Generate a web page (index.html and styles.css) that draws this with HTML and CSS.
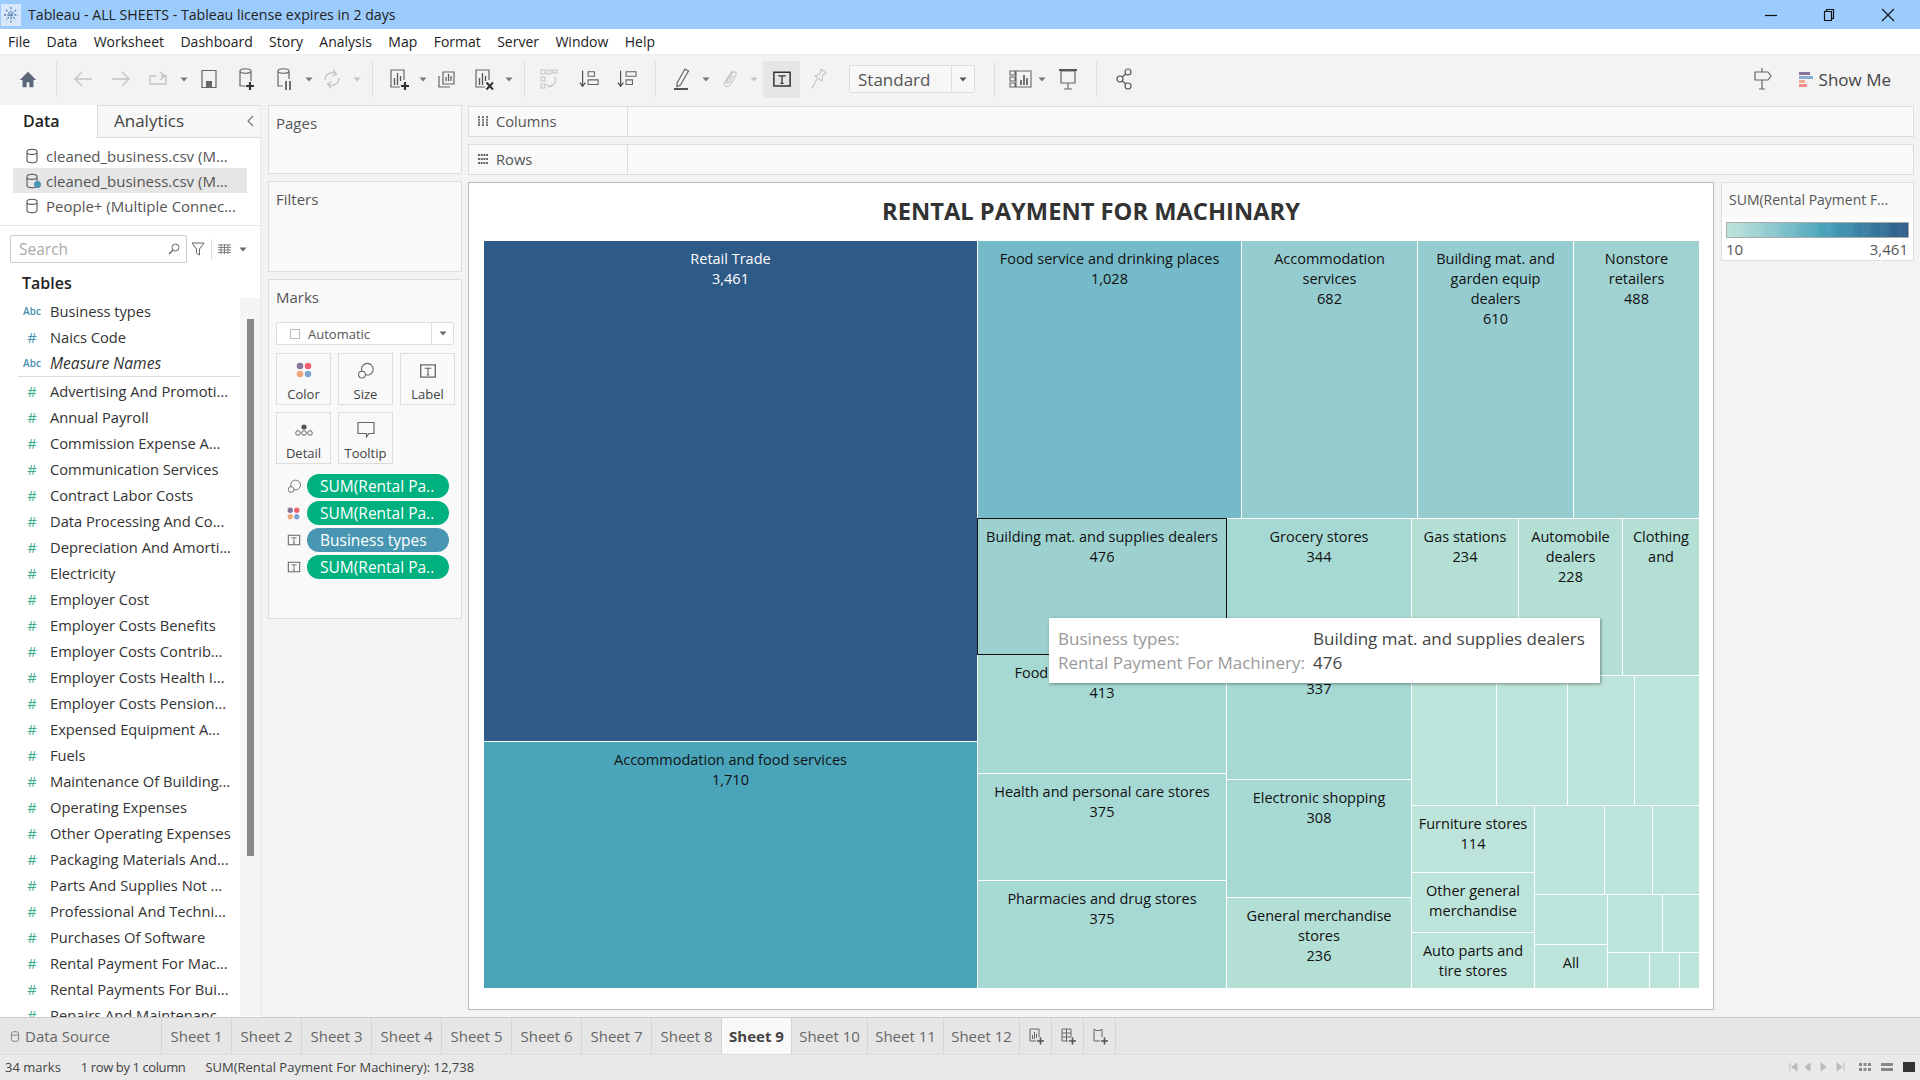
FILE: index.html
```html
<!DOCTYPE html>
<html lang="en">
<head>
    <meta charset="UTF-8">
    <title>Tableau - ALL SHEETS</title>
    <link rel="stylesheet" href="styles.css">
</head>
<body>
    <svg class="defs" width="0" height="0">
        <symbol id="cyl" viewBox="0 0 14 16"><path d="M2 3.5v9c0 3 10 3 10 0v-9c0-3-10-3-10 0zM2 4.5c0 2.5 10 2.5 10 0" fill="none" stroke="currentColor" stroke-width="1.1"/></symbol>
        <symbol id="tbox" viewBox="0 0 16 16"><path d="M1.5 2.5h13v11h-13z" fill="none" stroke="currentColor" stroke-width="1.2"/><path d="M5 5.5h6M8 5.5v6M6.8 11.5h2.4" fill="none" stroke="currentColor"/></symbol>
        <symbol id="size" viewBox="0 0 20 20"><circle cx="11.5" cy="8" r="6.5" fill="none" stroke="currentColor" stroke-width="1.2"/><circle cx="5.5" cy="14" r="3.8" fill="#f9f9f9" stroke="currentColor" stroke-width="1.2"/></symbol>
        <symbol id="dots" viewBox="0 0 16 16"><circle cx="4" cy="4" r="3.3" fill="#87749b"/><circle cx="12" cy="4" r="3.3" fill="#f0616d"/><circle cx="4" cy="12" r="3.3" fill="#f0a878"/><circle cx="12" cy="12" r="3.3" fill="#7fa6d2"/></symbol>
        <symbol id="caret" viewBox="0 0 8 5"><path d="M0.5 0.5h7L4 4.5z" fill="currentColor"/></symbol>
    </svg>

    <header class="titlebar">
        <svg class="applogo" width="20" height="22" viewBox="0 0 20 22">
            <rect width="20" height="22" fill="#d8e8fa"/>
            <path d="M10 3v16M3 11h14M5 6l10 10M15 6L5 16" stroke="#4d7fb0" stroke-width="1.3" stroke-dasharray="2 1.4"/>
        </svg>
        <span class="titletext">Tableau - ALL SHEETS - Tableau license expires in 2 days</span>
        <div class="winctl">
            <svg width="12" height="12" viewBox="0 0 12 12"><path d="M0 6.5h12" stroke="#111" stroke-width="1.2"/></svg>
            <svg width="12" height="14" viewBox="0 0 12 14"><path d="M1.5 3.5h7v9h-7zM3.5 3V1.5h7v9H9" fill="none" stroke="#111" stroke-width="1.2"/></svg>
            <svg width="14" height="14" viewBox="0 0 14 14"><path d="M1 1l12 12M13 1L1 13" stroke="#111" stroke-width="1.1"/></svg>
        </div>
    </header>

    <nav class="menubar">
        <span>File</span><span>Data</span><span>Worksheet</span><span>Dashboard</span><span>Story</span><span>Analysis</span><span>Map</span><span>Format</span><span>Server</span><span>Window</span><span>Help</span>
    </nav>

    <div class="toolbar">
        <div class="tool"><svg width="20" height="20" viewBox="0 0 22 22"><path d="M11 3L2 12h3v8h4.500v-5.500h3V20H17v-8h3z" fill="#5b6778"/></svg></div>
        <i class="sep"></i>
        <div class="tool off"><svg width="22" height="22" viewBox="0 0 22 22"><path d="M20 11H3M10 4l-7 7 7 7" fill="none" stroke="currentColor" stroke-width="1.4"/></svg></div>
        <div class="tool off"><svg width="22" height="22" viewBox="0 0 22 22"><path d="M2 11h17M12 4l7 7-7 7" fill="none" stroke="currentColor" stroke-width="1.4"/></svg></div>
        <div class="tool off"><svg width="22" height="22" viewBox="0 0 22 22"><path d="M8 8H2v8h16V8h-5M12 4l5 4-5 4" fill="none" stroke="currentColor" stroke-width="1.4"/></svg></div>
        <div class="drop"><svg width="8" height="5"><use href="#caret"/></svg></div>
        <div class="tool"><svg width="22" height="22" viewBox="0 0 22 22"><path d="M4 2.500h14v17H4z" fill="none" stroke="#666" stroke-width="1.2"/><path d="M8 13h6v6.500H8z" fill="#666"/></svg></div>
        <div class="tool"><svg width="22" height="24" viewBox="0 0 22 24"><path d="M4 4v15h5M15 14V4c0-3-11-3-11 0 0 3 11 3 11 0" fill="none" stroke="#666" stroke-width="1.2"/><path d="M10 19h8M14 15v8" stroke="#333" stroke-width="2.200"/></svg></div>
        <div class="tool"><svg width="22" height="24" viewBox="0 0 22 24"><path d="M4 4v15h5M15 12V4c0-3-11-3-11 0 0 3 11 3 11 0" fill="none" stroke="#666" stroke-width="1.2"/><path d="M12 14v9M16 14v9" stroke="#444" stroke-width="1.500"/></svg></div>
        <div class="drop tight"><svg width="8" height="5"><use href="#caret"/></svg></div>
        <div class="tool off"><svg width="22" height="22" viewBox="0 0 22 22"><path d="M4 12a7 7 0 0 1 11-6M18 10a7 7 0 0 1-11 6M12 2l3.500 4-4 2M10 20l-3.500-4 4-2" fill="none" stroke="currentColor" stroke-width="1.300"/></svg></div>
        <div class="drop off"><svg width="8" height="5"><use href="#caret"/></svg></div>
        <i class="sep"></i>
        <div class="tool"><svg width="22" height="24" viewBox="0 0 22 24"><path d="M12 20H3V3h13v10" fill="none" stroke="#666" stroke-width="1.2"/><path d="M6.500 18V11M9.500 18V6M12.500 14V9" stroke="#555" stroke-width="1.300"/><path d="M13 19h8M17 15v8" stroke="#333" stroke-width="2.200"/></svg></div>
        <div class="drop tight"><svg width="8" height="5"><use href="#caret"/></svg></div>
        <div class="tool"><svg width="22" height="22" viewBox="0 0 22 22"><path d="M8 4h11v12H8z M4 8v11h11" fill="none" stroke="#666" stroke-width="1.2"/><path d="M11 13V9M13.500 13V6M16 13V8" stroke="#555" stroke-width="1.200"/></svg></div>
        <div class="tool"><svg width="22" height="24" viewBox="0 0 22 24"><path d="M12 20H3V3h13v10" fill="none" stroke="#666" stroke-width="1.2"/><path d="M6.500 18V11M9.500 18V6M12.500 14V9" stroke="#555" stroke-width="1.300"/><path d="M13.500 15.500l6.500 7M20 15.500l-6.500 7" stroke="#333" stroke-width="2"/></svg></div>
        <div class="drop"><svg width="8" height="5"><use href="#caret"/></svg></div>
        <i class="sep"></i>
        <div class="tool off shift-left"><svg width="22" height="24" viewBox="0 0 22 24"><path d="M3 3h4v4H3zM9 3h4v4H9zM15 3h4v3h-4zM3 10h4v4H3zM3 17h4v4H3zM17 10c2 5-1 9-6 10M9 17l2 3 3-2" fill="none" stroke="currentColor" stroke-width="1.100"/></svg></div>
        <div class="tool"><svg width="20" height="22" viewBox="0 0 22 24"><path d="M4 3v16M1 16l3 4 3-4" fill="none" stroke="#444" stroke-width="1.200"/><path d="M10 4h7v5h-7zM10 13h11v5H10z" fill="none" stroke="#666" stroke-width="1.200"/></svg></div>
        <div class="tool"><svg width="20" height="22" viewBox="0 0 22 24"><path d="M4 3v16M1 16l3 4 3-4" fill="none" stroke="#444" stroke-width="1.200"/><path d="M10 4h11v5H10zM10 13h7v5h-7z" fill="none" stroke="#666" stroke-width="1.200"/></svg></div>
        <i class="sep"></i>
        <div class="tool"><svg width="22" height="24" viewBox="0 0 22 24"><path d="M6 16L14 2l3.500 2-8 14-3.500 1.500z" fill="none" stroke="#666" stroke-width="1.200"/><path d="M3 22h14" stroke="#555" stroke-width="2"/></svg></div>
        <div class="drop tight"><svg width="8" height="5"><use href="#caret"/></svg></div>
        <div class="tool off"><svg width="22" height="24" viewBox="0 0 22 24"><path d="M14 4L7 15c-2 4 3 6 5 3l6-10c1-3-2-4-4-2L9 14c-1 2 1 3 2 1l4-7" fill="none" stroke="currentColor" stroke-width="1.100"/></svg></div>
        <div class="drop off"><svg width="8" height="5"><use href="#caret"/></svg></div>
        <div class="toggle"><svg width="20" height="20" class="dark"><use href="#tbox"/></svg></div>
        <div class="tool off"><svg width="22" height="24" viewBox="0 0 22 24"><path d="M13 2l5 4-3 2-1 6-7-5 5-2zM9 12l-5 9" fill="none" stroke="currentColor" stroke-width="1.100"/></svg></div>
        <div class="picker"><span>Standard</span><b><svg width="8" height="5"><use href="#caret"/></svg></b></div>
        <i class="sep wide"></i>
        <div class="tool"><svg width="24" height="22" viewBox="0 0 24 22"><path d="M1 3h5v4H1zM1 9h5v4H1zM1 15h5v4H1zM7 3h15v16H7z" fill="none" stroke="#666" stroke-width="1.100"/><path d="M12 17v-5M15 17V7M18 17v-7" stroke="#555" stroke-width="1.600"/></svg></div>
        <div class="drop tight pull"><svg width="8" height="5"><use href="#caret"/></svg></div>
        <div class="tool"><svg width="22" height="24" viewBox="0 0 22 24"><path d="M2 3h18" stroke="#555" stroke-width="2"/><path d="M4 4h14v12H4zM11 16v6M7 22h8" fill="none" stroke="#666" stroke-width="1.200"/></svg></div>
        <i class="sep"></i>
        <div class="tool"><svg width="22" height="24" viewBox="-2 0 22 24"><circle cx="14" cy="5" r="3" fill="none" stroke="#555" stroke-width="1.200"/><circle cx="6" cy="12" r="3" fill="none" stroke="#555" stroke-width="1.200"/><circle cx="14" cy="19" r="3" fill="none" stroke="#555" stroke-width="1.200"/><path d="M8 10l4-3M8 14l4 3" stroke="#555" stroke-width="1.200"/></svg></div>
        <div class="tool end"><svg width="22" height="24" viewBox="0 0 22 24"><path d="M3 5h13l3 4-3 4H3zM10 1v4M10 13v9M7 22h6" fill="none" stroke="#666" stroke-width="1.200"/></svg></div>
        <div class="showme">
            <div class="showme-bars"><i class="b1"></i><i class="b2"></i><i class="b3"></i><i class="b4"></i></div>
            <span>Show Me</span>
        </div>
    </div>

    <main class="workspace">
        <aside class="datapane">
            <div class="pane-tabs">
                <div class="pane-tab active">Data</div>
                <div class="pane-tab">Analytics<svg class="collapse" width="8" height="12" viewBox="0 0 8 12"><path d="M7 1L2 6l5 5" fill="none" stroke="#777" stroke-width="1.200"/></svg></div>
            </div>
            <div class="sources">
                <div class="source"><svg width="14" height="16"><use href="#cyl"/></svg>cleaned_business.csv (M...</div>
                <div class="source current"><svg width="14" height="16"><use href="#cyl"/></svg><i class="tick"></i>cleaned_business.csv (M...</div>
                <div class="source"><svg width="14" height="16"><use href="#cyl"/></svg>People+ (Multiple Connec...</div>
            </div>
            <div class="searchrow">
                <div class="searchbox">
                    <span>Search</span>
                    <svg width="12" height="12" viewBox="0 0 12 12"><circle cx="7.500" cy="4.500" r="3.500" fill="none" stroke="#666"/><path d="M5 7l-4 4" stroke="#666" stroke-width="1.300"/></svg>
                </div>
                <svg class="funnel" width="14" height="14" viewBox="0 0 14 14"><path d="M1 1h12L8.500 7v6l-3-2V7z" fill="none" stroke="#666"/></svg>
                <i class="searchsep"></i>
                <svg width="13" height="10" viewBox="0 0 13 10"><path d="M0 1h13M0 3.500h13M0 6h13M0 8.500h13M3 0v10M6.500 0v10M10 0v10" stroke="#777" stroke-width="0.900"/></svg>
                <svg class="searchcaret" width="8" height="5"><use href="#caret"/></svg>
            </div>
            <h3 class="tables">Tables</h3>
            <div class="fieldarea">
                <div class="fields">
                    <div class="field"><b class="abc">Abc</b>Business types</div>
                    <div class="field"><b class="hash dim">#</b>Naics Code</div>
                    <div class="field calc"><b class="abc">Abc</b><em>Measure Names</em></div>
                    <div class="fields-line"></div>
                    <div class="field"><b class="hash">#</b>Advertising And Promoti...</div>
                    <div class="field"><b class="hash">#</b>Annual Payroll</div>
                    <div class="field"><b class="hash">#</b>Commission Expense A...</div>
                    <div class="field"><b class="hash">#</b>Communication Services</div>
                    <div class="field"><b class="hash">#</b>Contract Labor Costs</div>
                    <div class="field"><b class="hash">#</b>Data Processing And Co...</div>
                    <div class="field"><b class="hash">#</b>Depreciation And Amorti...</div>
                    <div class="field"><b class="hash">#</b>Electricity</div>
                    <div class="field"><b class="hash">#</b>Employer Cost</div>
                    <div class="field"><b class="hash">#</b>Employer Costs Benefits</div>
                    <div class="field"><b class="hash">#</b>Employer Costs Contrib...</div>
                    <div class="field"><b class="hash">#</b>Employer Costs Health I...</div>
                    <div class="field"><b class="hash">#</b>Employer Costs Pension...</div>
                    <div class="field"><b class="hash">#</b>Expensed Equipment A...</div>
                    <div class="field"><b class="hash">#</b>Fuels</div>
                    <div class="field"><b class="hash">#</b>Maintenance Of Building...</div>
                    <div class="field"><b class="hash">#</b>Operating Expenses</div>
                    <div class="field"><b class="hash">#</b>Other Operating Expenses</div>
                    <div class="field"><b class="hash">#</b>Packaging Materials And...</div>
                    <div class="field"><b class="hash">#</b>Parts And Supplies Not ...</div>
                    <div class="field"><b class="hash">#</b>Professional And Techni...</div>
                    <div class="field"><b class="hash">#</b>Purchases Of Software</div>
                    <div class="field"><b class="hash">#</b>Rental Payment For Mac...</div>
                    <div class="field"><b class="hash">#</b>Rental Payments For Bui...</div>
                    <div class="field"><b class="hash">#</b>Repairs And Maintenanc...</div>
                </div>
                <div class="scrolltrack"><div class="scrollthumb"></div></div>
            </div>
        </aside>

        <section class="cards">
            <div class="card pages"><h4>Pages</h4></div>
            <div class="card filters"><h4>Filters</h4></div>
            <div class="card marks">
                <h4>Marks</h4>
                <div class="marktype">
                    <i class="markbox"></i><span>Automatic</span>
                    <b><svg width="8" height="5"><use href="#caret"/></svg></b>
                </div>
                <div class="markbtns">
                    <div class="markbtn"><svg width="16" height="16"><use href="#dots"/></svg>Color</div>
                    <div class="markbtn"><svg width="18" height="18"><use href="#size"/></svg>Size</div>
                    <div class="markbtn"><svg width="18" height="18"><use href="#tbox"/></svg>Label</div>
                    <div class="markbtn"><svg width="20" height="18" viewBox="0 0 20 18"><circle cx="10" cy="6" r="2.600" fill="#555"/><circle cx="4" cy="12" r="2.300" fill="none" stroke="#666"/><circle cx="10" cy="12" r="2.300" fill="none" stroke="#666"/><circle cx="16" cy="12" r="2.300" fill="none" stroke="#666"/></svg>Detail</div>
                    <div class="markbtn"><svg width="18" height="18" viewBox="0 0 18 18"><path d="M1 1.500h16v11h-5l-2.500 3.500v-3.500H1z" fill="none" stroke="#666" stroke-width="1.200"/></svg>Tooltip</div>
                </div>
                <div class="pillrow"><svg width="15" height="15"><use href="#size"/></svg><div class="pill">SUM(Rental Pa..</div></div>
                <div class="pillrow"><svg width="13" height="13"><use href="#dots"/></svg><div class="pill">SUM(Rental Pa..</div></div>
                <div class="pillrow"><svg width="14" height="14"><use href="#tbox"/></svg><div class="pill blue">Business types</div></div>
                <div class="pillrow"><svg width="14" height="14"><use href="#tbox"/></svg><div class="pill">SUM(Rental Pa..</div></div>
            </div>
        </section>

        <section class="viewarea">
            <div class="shelf">
                <div class="shelf-label"><svg width="12" height="12" viewBox="0 0 12 12"><path d="M2 1v10M6 1v10M10 1v10" stroke="#666" stroke-width="1.800" stroke-dasharray="2 0.700"/></svg>Columns</div>
                <div class="shelf-drop"></div>
            </div>
            <div class="shelf">
                <div class="shelf-label"><svg width="12" height="12" viewBox="0 0 12 12"><path d="M1 2h10M1 6h10M1 10h10" stroke="#666" stroke-width="1.800" stroke-dasharray="2 0.700"/></svg>Rows</div>
                <div class="shelf-drop"></div>
            </div>
            <div class="vizrow">
                <div class="viz">
                    <h2 class="viztitle">RENTAL PAYMENT FOR MACHINARY</h2>
                    <!-- cell sizes come from the treemap data, so they stay inline -->
                    <div class="treemap">
                        <div class="tcol" style="flex:0 0 493px">
                            <div class="cell c-retail" style="flex:0 0 500px">Retail Trade<br>3,461</div>
                            <div class="cell c-accfood" style="flex:0 0 246px">Accommodation and food services<br>1,710</div>
                        </div>
                        <div class="tcol" style="flex:0 0 721px">
                            <div class="trow" style="flex:0 0 277px">
                                <div class="cell c-foodserv" style="flex:0 0 263px">Food service and drinking places<br>1,028</div>
                                <div class="cell c-top" style="flex:0 0 175px">Accommodation<br>services<br>682</div>
                                <div class="cell c-top" style="flex:0 0 155px">Building mat. and<br>garden equip<br>dealers<br>610</div>
                                <div class="cell c-top2" style="flex:0 0 125px">Nonstore<br>retailers<br>488</div>
                            </div>
                            <div class="trow" style="flex:0 0 469px">
                                <div class="tcol" style="flex:0 0 248px">
                                    <div class="cell c-hover" style="flex:0 0 135px">Building mat. and supplies dealers<br>476</div>
                                    <div class="cell c-mid" style="flex:0 0 118px">Food and beverage stores<br>413</div>
                                    <div class="cell c-mid" style="flex:0 0 106px">Health and personal care stores<br>375</div>
                                    <div class="cell c-mid" style="flex:0 0 107px">Pharmacies and drug stores<br>375</div>
                                </div>
                                <div class="tcol" style="flex:0 0 184px">
                                    <div class="cell c-mid" style="flex:0 0 131px">Grocery stores<br>344</div>
                                    <div class="cell c-mid" style="flex:0 0 128px">&nbsp;<br>337</div>
                                    <div class="cell c-mid" style="flex:0 0 117px">Electronic shopping<br>308</div>
                                    <div class="cell c-low" style="flex:0 0 90px">General merchandise<br>stores<br>236</div>
                                </div>
                                <div class="tcol" style="flex:0 0 287px">
                                    <div class="trow" style="flex:0 0 156px">
                                        <div class="cell c-low" style="flex:0 0 106px">Gas stations<br>234</div>
                                        <div class="cell c-low" style="flex:0 0 103px">Automobile<br>dealers<br>228</div>
                                        <div class="cell c-low" style="flex:0 0 76px">Clothing<br>and</div>
                                    </div>
                                    <div class="trow" style="flex:0 0 129px">
                                        <div class="cell c-pale" style="flex:0 0 84px"></div>
                                        <div class="cell c-pale" style="flex:0 0 70px"></div>
                                        <div class="cell c-pale" style="flex:0 0 66px"></div>
                                        <div class="cell c-pale" style="flex:0 0 64px"></div>
                                    </div>
                                    <div class="trow" style="flex:0 0 182px">
                                        <div class="tcol" style="flex:0 0 122px">
                                            <div class="cell c-pale" style="flex:0 0 66px">Furniture stores<br>114</div>
                                            <div class="cell c-pale" style="flex:0 0 59px">Other general<br>merchandise</div>
                                            <div class="cell c-pale" style="flex:0 0 55px">Auto parts and<br>tire stores</div>
                                        </div>
                                        <div class="tcol" style="flex:0 0 164px">
                                            <div class="trow" style="flex:0 0 88px">
                                                <div class="cell c-pale" style="flex:0 0 69px"></div>
                                                <div class="cell c-pale" style="flex:0 0 47px"></div>
                                                <div class="cell c-pale" style="flex:0 0 46px"></div>
                                            </div>
                                            <div class="trow" style="flex:0 0 93px">
                                                <div class="tcol" style="flex:0 0 72px">
                                                    <div class="cell c-pale" style="flex:0 0 49px"></div>
                                                    <div class="cell c-pale" style="flex:0 0 43px">All</div>
                                                </div>
                                                <div class="tcol" style="flex:0 0 91px">
                                                    <div class="trow" style="flex:0 0 57px">
                                                        <div class="cell c-pale" style="flex:0 0 54px"></div>
                                                        <div class="cell c-pale" style="flex:0 0 36px"></div>
                                                    </div>
                                                    <div class="trow" style="flex:0 0 35px">
                                                        <div class="cell c-pale" style="flex:0 0 41px"></div>
                                                        <div class="cell c-pale" style="flex:0 0 29px"></div>
                                                        <div class="cell c-pale" style="flex:0 0 19px"></div>
                                                    </div>
                                                </div>
                                            </div>
                                        </div>
                                    </div>
                                </div>
                            </div>
                        </div>
                    </div>
                    <div class="tip">
                        <span class="tip-key">Business types:</span><span>Building mat. and supplies dealers</span>
                        <span class="tip-key">Rental Payment For Machinery:</span><span>476</span>
                    </div>
                </div>
                <div class="legend">
                    <div class="legend-title">SUM(Rental Payment F...</div>
                    <div class="ramp"></div>
                    <div class="legend-ends"><span>10</span><span>3,461</span></div>
                </div>
            </div>
        </section>
    </main>

    <div class="tabbar">
        <div class="tab source-tab"><svg width="10" height="13"><use href="#cyl"/></svg>Data Source</div>
        <div class="tab">Sheet 1</div>
        <div class="tab">Sheet 2</div>
        <div class="tab">Sheet 3</div>
        <div class="tab">Sheet 4</div>
        <div class="tab">Sheet 5</div>
        <div class="tab">Sheet 6</div>
        <div class="tab">Sheet 7</div>
        <div class="tab">Sheet 8</div>
        <div class="tab active">Sheet 9</div>
        <div class="tab long">Sheet 10</div>
        <div class="tab long">Sheet 11</div>
        <div class="tab long">Sheet 12</div>
        <div class="tab newtab"><svg width="18" height="18" viewBox="0 0 18 18"><path d="M9 14H3V2h9v8" fill="none" stroke="#666"/><path d="M5.500 12V8M7.500 12V5M9.500 11V7" stroke="#666"/><path d="M10 14h7M13.500 10.500v7" stroke="#555" stroke-width="1.600"/></svg></div>
        <div class="tab newtab"><svg width="18" height="18" viewBox="0 0 18 18"><path d="M9 14H3V2h9v8M3 6h9M3 10h9M7.500 2v12" fill="none" stroke="#666"/><path d="M10 14h7M13.500 10.500v7" stroke="#555" stroke-width="1.600"/></svg></div>
        <div class="tab newtab"><svg width="18" height="18" viewBox="0 0 18 18"><path d="M3 2l2 1.500h4L11 2v8M3 2v12h6" fill="none" stroke="#666"/><path d="M10 14h7M13.500 10.500v7" stroke="#555" stroke-width="1.600"/></svg></div>
    </div>

    <footer class="statusbar">
        <span>34 marks</span><span class="condensed">1 row by 1 column</span><span>SUM(Rental Payment For Machinery): 12,738</span>
        <div class="status-right">
            <svg width="60" height="10" viewBox="0 0 60 10"><path d="M1 1v8M8 1L3 5l5 4zM21 1l-5 4 5 4zM32 1l5 4-5 4zM48 1l5 4-5 4zM55 1v8" fill="#bbb" stroke="#bbb"/></svg>
            <svg class="sv" width="12" height="12" viewBox="0 0 12 12"><path d="M0 2h3v3H0zM4.500 2h3v3h-3zM9 2h3v3H9zM0 7h3v3H0zM4.500 7h3v3h-3zM9 7h3v3H9z" fill="#888"/></svg>
            <svg class="sv" width="12" height="12" viewBox="0 0 12 12"><path d="M0 2h12v3H0zM0 7h12v3H0z" fill="#888"/></svg>
            <svg class="sv" width="12" height="12" viewBox="0 0 12 12"><path d="M0 1h12v10H0z" fill="#333"/></svg>
        </div>
    </footer>
</body>
</html>
```

FILE: styles.css
```css
* {
    box-sizing: border-box;
}
body {
    margin: 0;
    width: 1920px;
    height: 1080px;
    overflow: hidden;
    display: flex;
    flex-direction: column;
    background: #f3f3f3;
    font-family: "Open Sans", sans-serif;
    font-size: 14px;
    color: #333;
}
.defs {
    position: absolute;
}

/* window chrome */
.titlebar {
    height: 29px;
    flex: none;
    display: flex;
    align-items: center;
    background: #9ccbfd;
    color: #222;
    padding-left: 1px;
}
.applogo {
    margin-right: 7px;
}
.titletext {
    font-size: 14.15px;
    flex: 1;
}
.winctl {
    display: flex;
    align-items: center;
    margin-right: 25px;
    gap: 46px;
}
.menubar {
    height: 25px;
    flex: none;
    display: flex;
    align-items: center;
    gap: 16.4px;
    padding-left: 8px;
    background: #fff;
    color: #222;
}

/* toolbar */
.toolbar {
    height: 51px;
    flex: none;
    display: flex;
    align-items: center;
    padding-left: 9px;
    padding-bottom: 2px;
    background: #f3f3f3;
    border-top: 1px solid #eee;
    color: #666;
}
.tool {
    width: 38px;
    height: 28px;
    display: flex;
    align-items: center;
    justify-content: center;
    color: #666;
}
.tool.off, .drop.off {
    color: #c4c4c4;
}
.tool.shift-left {
    margin-left: -2px;
    margin-right: 2px;
}
.drop {
    width: 12px;
    display: flex;
    justify-content: center;
    color: #777;
}
.drop.tight {
    width: 9px;
}
.drop.pull svg {
    margin-left: -5px;
}
.sep {
    width: 1px;
    height: 35px;
    background: #ddd;
    margin: 0 7px 0 9px;
}
.sep.wide {
    margin-left: 19px;
}
.toggle {
    width: 37px;
    height: 37px;
    margin-left: 3px;
    background: #e6e6e6;
    display: flex;
    align-items: center;
    justify-content: center;
}
.dark {
    color: #333;
}
.picker {
    width: 126px;
    height: 28px;
    margin-left: 11px;
    display: flex;
    align-items: center;
    border: 1px solid #ddd;
    border-radius: 2px;
    background: #f7f7f7;
    font-size: 17px;
    color: #555;
}
.picker span {
    flex: 1;
    padding-left: 8px;
}
.picker b {
    width: 23px;
    height: 100%;
    display: flex;
    align-items: center;
    justify-content: center;
    border-left: 1px solid #ddd;
}
.tool.end {
    margin-left: auto;
}
.showme {
    display: flex;
    align-items: center;
    gap: 6px;
    margin: 0 29px 0 17px;
    font-size: 17px;
    color: #444;
}
.showme-bars {
    display: flex;
    flex-direction: column;
    gap: 1px;
    width: 14px;
}
.showme-bars i {
    height: 3px;
    display: block;
}
.b1 { width: 11px; background: #87749b; }
.b2 { width: 14px; background: #88aed4; }
.b3 { width: 6px; background: #f0b08c; }
.b4 { width: 8px; background: #f58b8f; }

/* main area */
.workspace {
    height: 912px;
    flex: none;
    display: flex;
}
.datapane {
    width: 261px;
    flex: none;
    background: #fff;
    overflow: hidden;
    border-right: 1px solid #e6e6e6;
}
.pane-tabs {
    height: 33px;
    display: flex;
}
.pane-tab {
    flex: 1;
    position: relative;
    padding-left: 16px;
    line-height: 30px;
    font-size: 17px;
    color: #444;
    background: #f7f7f7;
    border-top: 1px solid #ddd;
    border-left: 1px solid #ddd;
    border-bottom: 1px solid #ddd;
}
.pane-tab.active {
    flex: 0 0 97px;
    padding-left: 23px;
    line-height: 33px;
    background: #fff;
    font-size: 16px;
    font-weight: 600;
    color: #222;
    border: 0;
}
.collapse {
    position: absolute;
    right: 6px;
    top: 9px;
}
.sources {
    height: 88px;
    padding-top: 5px;
    border-bottom: 1px solid #e6e6e6;
}
.source {
    height: 25px;
    margin: 0 13px;
    padding-left: 12px;
    display: flex;
    align-items: center;
    gap: 7px;
    color: #555;
    font-size: 15px;
    position: relative;
    white-space: nowrap;
}
.source.current {
    background: #e6e6e6;
}
.tick {
    position: absolute;
    left: 21px;
    top: 13px;
    width: 7px;
    height: 7px;
    border-radius: 50%;
    background: #4996b2;
}
.searchrow {
    height: 28px;
    margin: 9px 0 0 10px;
    display: flex;
    align-items: center;
}
.searchbox {
    width: 177px;
    height: 28px;
    padding: 0 6px 0 8px;
    display: flex;
    align-items: center;
    justify-content: space-between;
    border: 1px solid #ccc;
    border-radius: 2px;
    font-size: 15.5px;
    color: #aaa;
}
.funnel {
    margin-left: 4px;
}
.searchsep {
    width: 1px;
    height: 21px;
    background: #ddd;
    margin: 0 6px 0 6px;
}
.searchcaret {
    margin-left: 8px;
    color: #666;
}
.tables {
    height: 35px;
    margin: 0;
    padding-left: 22px;
    line-height: 40px;
    font-size: 16px;
    font-weight: 600;
    color: #222;
}
.fieldarea {
    display: flex;
    height: 718px;
}
.fields {
    width: 240px;
    flex: none;
}
.field {
    height: 26px;
    display: flex;
    align-items: center;
    color: #333;
    font-size: 14.7px;
    white-space: nowrap;
}
.field em {
    font-size: 15.6px;
}
.field b {
    width: 50px;
    flex: none;
    text-align: center;
    padding-left: 14px;
    font-weight: 400;
    color: #3fae8c;
}
.field .abc {
    font-size: 10px;
    font-weight: 600;
    color: #4a8fb0;
}
.field .dim {
    color: #4a8fb0;
}
.fields-line {
    height: 1px;
    margin: 0 0 1px 18px;
    background: #ddd;
}
.scrolltrack {
    flex: 1;
    background: #f5f5f5;
    padding: 21px 6px 0 7px;
}
.scrollthumb {
    height: 537px;
    background: #888;
}

.cards {
    width: 207px;
    flex: none;
    padding-left: 7px;
    padding-right: 6px;
}
.card {
    background: #f9f9f9;
    border: 1px solid #ddd;
    padding: 8px 7px;
}
.card h4 {
    margin: 0;
    font-size: 15px;
    font-weight: 400;
    color: #555;
    line-height: 18px;
}
.pages {
    height: 69px;
    margin-bottom: 7px;
}
.filters {
    height: 91px;
    margin-bottom: 7px;
}
.marks {
    height: 340px;
}
.marktype {
    height: 23px;
    margin-top: 16px;
    display: flex;
    align-items: center;
    border: 1px solid #ddd;
    border-radius: 2px;
    background: #fff;
    padding-left: 13px;
    font-size: 13px;
    color: #555;
}
.markbox {
    width: 10px;
    height: 10px;
    border: 1px solid #bbb;
    margin-right: 8px;
}
.marktype span {
    flex: 1;
}
.marktype b {
    width: 22px;
    height: 100%;
    display: flex;
    align-items: center;
    justify-content: center;
    border-left: 1px solid #ddd;
    color: #666;
}
.markbtns {
    display: grid;
    grid-template-columns: repeat(3, 55px);
    grid-auto-rows: 52px;
    gap: 7px;
    margin: 8px 0 10px;
}
.markbtn {
    display: flex;
    flex-direction: column;
    align-items: center;
    justify-content: space-between;
    border: 1px solid #ddd;
    padding-top: 8px;
    padding-bottom: 1px;
    font-size: 13px;
    line-height: 18px;
    color: #444;
}
.markbtn svg {
    color: #666;
}
.pillrow {
    height: 24px;
    margin-bottom: 3px;
    margin-right: 5px;
    display: flex;
    align-items: center;
    color: #666;
}
.pillrow svg {
    margin-left: 11px;
    margin-right: auto;
}
.pill {
    width: 142px;
    height: 24px;
    padding-left: 13px;
    border-radius: 12px;
    background: #00b180;
    color: #fff;
    line-height: 24px;
    font-size: 15.5px;
    white-space: nowrap;
}
.pill.blue {
    background: #4996b2;
}

.viewarea {
    width: 1446px;
    flex: none;
    padding-top: 1px;
}
.shelf {
    height: 31px;
    margin-bottom: 7px;
    display: flex;
}
.shelf-label {
    width: 160px;
    display: flex;
    align-items: center;
    gap: 7px;
    padding-left: 8px;
    padding-bottom: 2px;
    background: #f9f9f9;
    border: 1px solid #ddd;
    color: #555;
    font-size: 14.7px;
}
.shelf-drop {
    flex: 1;
    background: #f9f9f9;
    border: 1px solid #ddd;
    border-left: 0;
}
.vizrow {
    display: flex;
    gap: 7px;
    align-items: flex-start;
}
.viz {
    position: relative;
    width: 1246px;
    height: 828px;
    background: #fff;
    border: 1px solid #bbb;
    padding-left: 15px;
}
.viztitle {
    height: 58px;
    margin: 0 0 0 -15px;
    line-height: 56px;
    text-align: center;
    font-size: 23.7px;
    font-weight: 700;
    color: #333;
}

/* treemap */
.treemap {
    display: flex;
    gap: 1px;
    width: 1215px;
    height: 747px;
    background: #fff;
}
.tcol {
    display: flex;
    flex-direction: column;
    gap: 1px;
    min-width: 0;
}
.trow {
    display: flex;
    gap: 1px;
    min-height: 0;
}
.cell {
    padding-top: 8px;
    overflow: hidden;
    text-align: center;
    font-size: 14.5px;
    line-height: 20px;
    color: #111;
}
.c-retail { background: #2e5a87; color: #fff; }
.c-accfood { background: #4aa5bb; }
.c-foodserv { background: #75bac8; }
.c-top { background: #95ccd0; }
.c-top2 { background: #9fd2d0; }
.c-hover {
    background: #9cd1d0;
    outline: 1px solid #111;
    position: relative;
}
.c-mid { background: #a7d9d4; }
.c-low { background: #b3dfd5; }
.c-pale { background: #bde4da; }

.tip {
    position: absolute;
    left: 580px;
    top: 435px;
    width: 551px;
    height: 65px;
    padding: 8px 9px 0;
    display: grid;
    grid-template-columns: 255px 1fr;
    grid-auto-rows: 24px;
    align-items: center;
    background: #fff;
    box-shadow: 1px 1px 3px rgba(0, 0, 0, 0.4);
    font-size: 17px;
    color: #444;
    white-space: nowrap;
}
.tip-key {
    color: #999;
}

/* colour legend */
.legend {
    width: 193px;
    height: 79px;
    background: #fff;
    border: 1px solid #ddd;
}
.legend-title {
    height: 34px;
    padding: 0 7px;
    line-height: 34px;
    background: #f9f9f9;
    color: #555;
    white-space: nowrap;
}
.ramp {
    height: 16px;
    margin: 5px 4px 0;
    border: 1px solid #aaa;
    background:
        repeating-linear-gradient(to right, transparent 0 9px, rgba(255, 255, 255, 0.04) 9px 18px),
        linear-gradient(to right, #bde4da, #95ccd0 22%, #4aa5bb 52%, #3b87a8 70%, #2e5a87);
}
.legend-ends {
    display: flex;
    justify-content: space-between;
    padding: 1px 5px 0 4px;
    color: #555;
    font-size: 15px;
}

/* sheet tabs + status */
.tabbar {
    height: 38px;
    flex: none;
    display: flex;
    background: #e6e6e6;
    border-top: 1px solid #ccc;
    border-bottom: 1px solid #ddd;
}
.tab {
    width: 70px;
    display: flex;
    align-items: center;
    justify-content: center;
    border-right: 1px solid #d4d4d4;
    color: #666;
    font-size: 15px;
    white-space: nowrap;
}
.tab.long {
    width: 76px;
}
.tab.source-tab {
    width: 162px;
    justify-content: flex-start;
    padding-left: 10px;
    gap: 5px;
}
.tab.active {
    background: #f9f9f9;
    font-weight: 700;
    color: #444;
}
.tab.newtab {
    width: 32px;
}
.statusbar {
    flex: 1;
    display: flex;
    align-items: center;
    padding-left: 5px;
    padding-bottom: 2px;
    gap: 20px;
    background: #e9e9e9;
    color: #444;
    font-size: 13px;
}
.condensed {
    letter-spacing: -0.4px;
}
.status-right {
    margin-left: auto;
    display: flex;
    align-items: center;
    margin-right: 5px;
}
.sv {
    margin-left: 10px;
}
```
